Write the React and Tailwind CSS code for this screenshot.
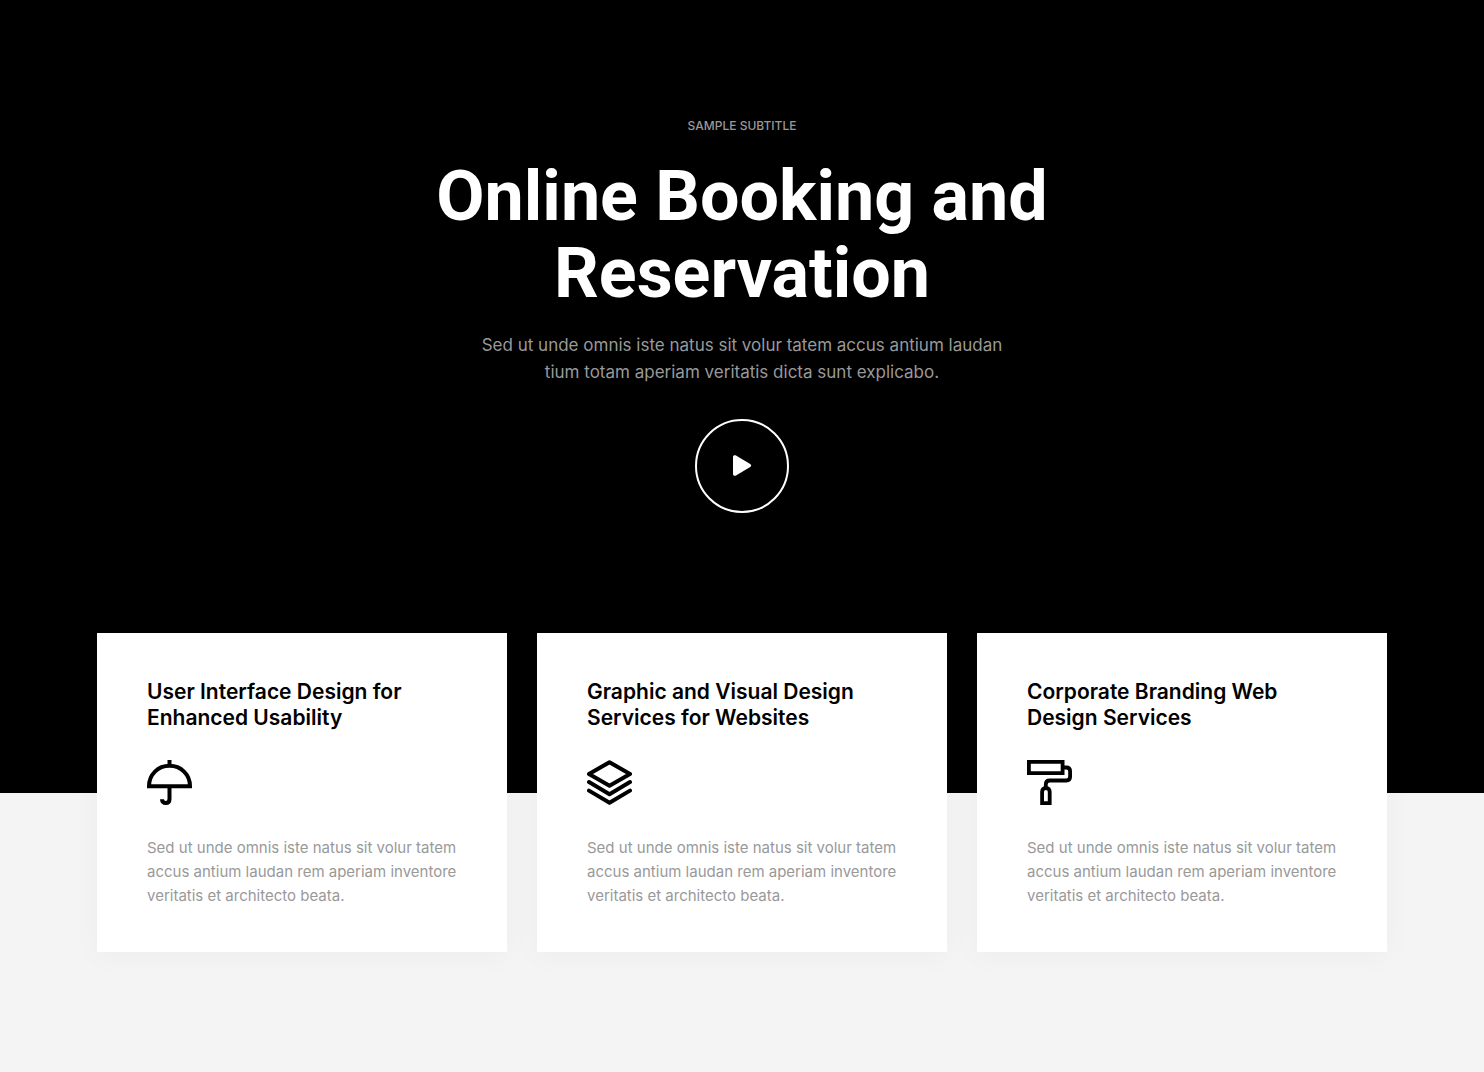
import React from "react";

function UmbrellaIcon() {
  return (
    <svg viewBox="0 0 45 45" className="block size-[45px]" fill="none" stroke="currentColor" strokeWidth="4" aria-hidden="true">
      <path d="M22.5 0V6" />
      <path d="M2 26.2C2 14.5 11 5.8 22.5 5.8S43 14.5 43 26.2Z" />
      <path d="M22.5 27V39C22.5 41.5 21 43 18.8 43S15 41.5 15 39.2" />
    </svg>
  );
}

function LayersIcon() {
  return (
    <svg viewBox="0 0 45 45" className="block size-[45px]" fill="none" stroke="currentColor" strokeWidth="4" strokeLinejoin="round" strokeLinecap="round" aria-hidden="true">
      <path d="M22.5 2.2L43 14L22.5 25.8L2 14Z" />
      <path d="M2 22L22.5 34.2L43 22" />
      <path d="M2 30.6L22.5 42.8L43 30.6" />
    </svg>
  );
}

function RollerIcon() {
  return (
    <svg viewBox="0 0 45 45" className="block size-[45px]" fill="none" stroke="currentColor" strokeWidth="3.8" aria-hidden="true">
      <path d="M1.9 1.9H35.6V13.1H1.9Z" />
      <path d="M36 7.5H39.3C41.6 7.5 43.1 9 43.1 11.2V16.8C43.1 19 41.6 20.5 39.3 20.5H22.8C20.2 20.5 18.8 22 18.8 24.5V28" />
      <path d="M15.1 43.1V31.8C15.1 29.6 16.5 28.1 18.9 28.1S22.7 29.6 22.7 31.8V43.1Z" />
    </svg>
  );
}

const services = [
  { title: "User Interface Design for Enhanced Usability", Icon: UmbrellaIcon },
  { title: "Graphic and Visual Design Services for Websites", Icon: LayersIcon },
  { title: "Corporate Branding Web Design Services", Icon: RollerIcon },
];

function ServiceCard({ title, Icon }) {
  return (
    <article className="bg-white px-[50px] pt-[46px] pb-11 text-black shadow-[0_5px_30px_rgba(0,0,0,0.03)]">
      <h2 className="max-w-[280px] text-[21px] leading-[26px] font-semibold">{title}</h2>
      <div className="mt-[29px] mb-[31px]">
        <Icon />
      </div>
      <p className="text-[15px] leading-6 text-[#999]">
        Sed ut unde omnis iste natus sit volur tatem accus antium laudan rem aperiam inventore veritatis et architecto beata.
      </p>
    </article>
  );
}

export default function App() {
  return (
    <main className="min-h-screen bg-[#f4f4f4] font-['Inter',sans-serif]">
      <section className="flex flex-col items-center bg-black px-6 pt-[116px] pb-[280px] text-center">
        <p className="text-xs leading-5 font-medium text-[#999] uppercase">Sample Subtitle</p>
        <h1 className="mt-[22px] max-w-[660px] font-['Roboto',sans-serif] text-[70px] leading-[77px] font-bold text-white">
          Online Booking and Reservation
        </h1>
        <p className="mt-5 max-w-[540px] text-[17px] leading-[27px] text-[#999]">
          Sed ut unde omnis iste natus sit volur tatem accus antium laudan tium totam aperiam veritatis dicta sunt explicabo.
        </p>
        <button type="button" aria-label="Play video" className="mt-[33px] flex size-[94px] items-center justify-center rounded-full border-2 border-white text-white">
          <svg viewBox="0 0 20 22" className="h-[22px] w-5" fill="currentColor" aria-hidden="true">
            <path d="M1 2.1C1 .4 2.6-.2 4 .6L18.2 9C19.5 9.8 19.5 11.2 18.2 12L4 20.4C2.6 21.2 1 20.6 1 19Z" />
          </svg>
        </button>
      </section>
      <section className="mx-auto -mt-40 grid max-w-[1338px] grid-cols-1 gap-[30px] px-6 pb-[120px] md:grid-cols-3">
        {services.map((service) => (
          <ServiceCard key={service.title} {...service} />
        ))}
      </section>
    </main>
  );
}
